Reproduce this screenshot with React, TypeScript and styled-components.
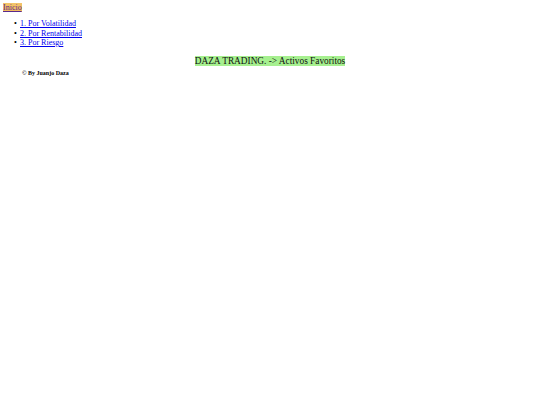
import styled, { createGlobalStyle } from 'styled-components';

const GlobalStyle = createGlobalStyle`
  body {
    margin: 0;
    background: #fff;
    font-family: "Liberation Serif", "Times New Roman", serif;
  }
`;

const Page = styled.div`
  padding: 3px 3px 0 3px;
`;

const Nav = styled.div`
  font-size: 8px;
  line-height: 9px;
`;

const Home = styled.a`
  color: #5a2a8c;
  background: linear-gradient(#f3c46a, #f1b85e);
`;

const Menu = styled.ul`
  margin: 7px 0 0 0;
  padding-left: 11px;
  list-style: none;
  font-size: 8px;
  line-height: 9.5px;
  li::before {
    content: '•';
    display: inline-block;
    width: 6px;
    color: #000;
  }
  a {
    color: #0000ee;
  }
`;

const Title = styled.div`
  text-align: center;
  margin-top: 7px;
  font-size: 9.3px;
  line-height: 12px;
  span {
    background: #a6f08f;
    color: #111;
  }
`;

const Credit = styled.p`
  margin: 3px 0 0 19px;
  font-size: 6px;
  line-height: 7px;
  font-weight: bold;
  color: #000;
`;

const App = () => {
  return (
    <>
      <GlobalStyle />
      <Page>
        <Nav>
          <Home href="#">Inicio</Home>
        </Nav>
        <Menu>
          <li>
            <a href="#">1. Por Volatilidad</a>
          </li>
          <li>
            <a href="#">2. Por Rentabilidad</a>
          </li>
          <li>
            <a href="#">3. Por Riesgo</a>
          </li>
        </Menu>
        <Title>
          <span>DAZA TRADING. -&gt; Activos Favoritos</span>
        </Title>
        <Credit>© By Juanjo Daza</Credit>
      </Page>
    </>
  );
};

export default App;
